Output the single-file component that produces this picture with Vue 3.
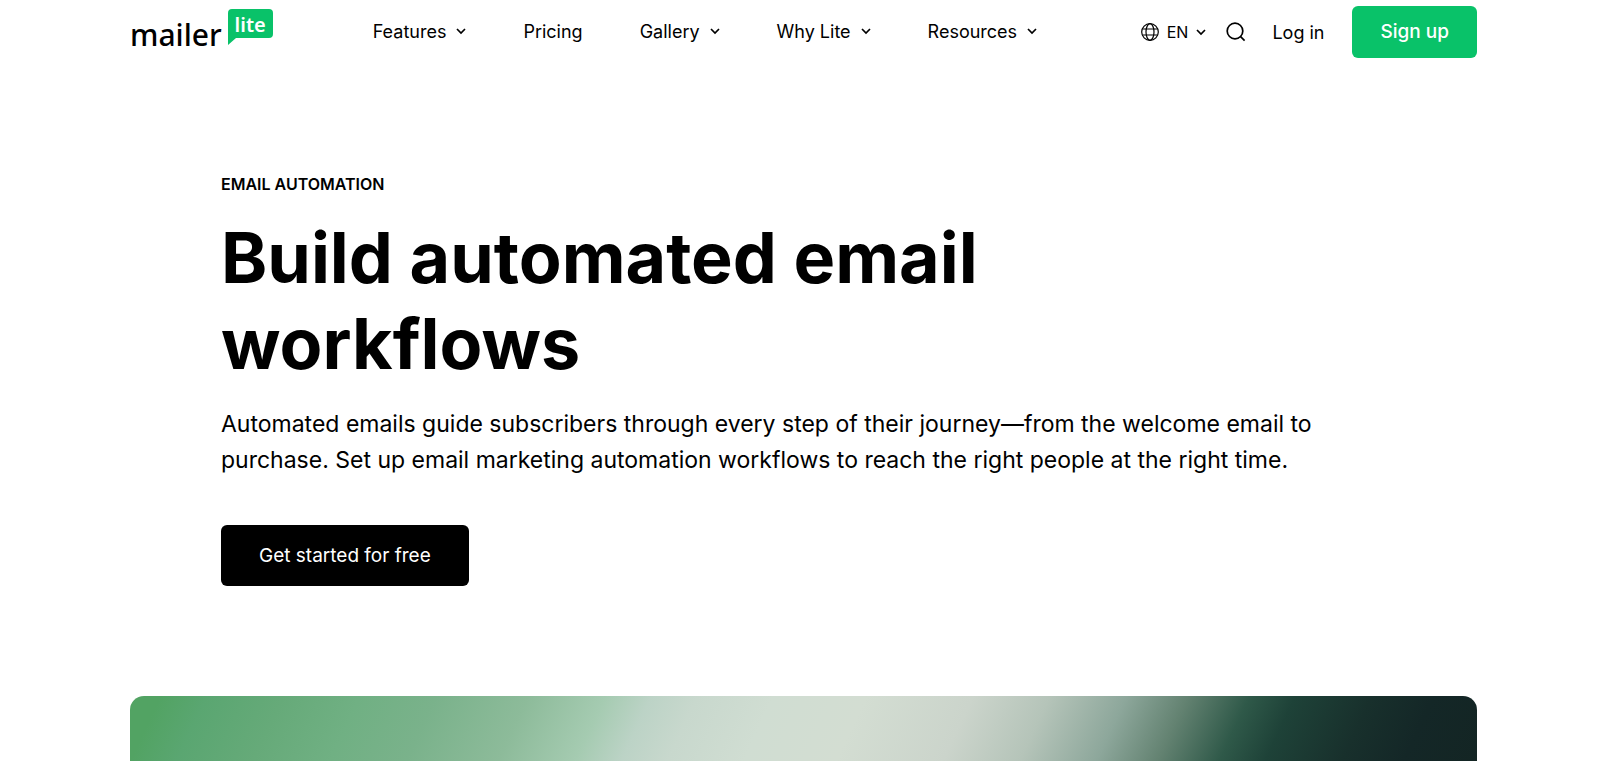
<script setup>
const links = [
  { label: 'Features', menu: true },
  { label: 'Pricing', menu: false },
  { label: 'Gallery', menu: true },
  { label: 'Why Lite', menu: true },
  { label: 'Resources', menu: true },
]
</script>

<template>
  <div class="page">
    <header class="bar">
      <a class="logo" href="#" aria-label="MailerLite home">
        <span class="logo-word">mailer</span>
        <span class="logo-bubble">
          <svg class="bubble-shape" viewBox="0 0 45 37" aria-hidden="true">
            <path d="M4 0H41Q45 0 45 4V25Q45 29 41 29H8L0 36V4Q0 0 4 0Z" fill="#09c269" />
          </svg>
          <span class="logo-lite">lite</span>
        </span>
      </a>

      <nav class="links" aria-label="Main">
        <template v-for="link in links" :key="link.label">
          <button v-if="link.menu" class="link" type="button">
            {{ link.label }}
            <svg class="chevron" viewBox="0 0 10 10" aria-hidden="true"><path d="M1 2L5 6L9 2" /></svg>
          </button>
          <a v-else class="link plain" href="#">{{ link.label }}</a>
        </template>
      </nav>

      <div class="tools">
        <button class="language" type="button">
          <svg class="globe" viewBox="0 0 18 18" aria-hidden="true">
            <circle cx="9" cy="9" r="8.3" />
            <ellipse cx="9" cy="9" rx="4" ry="8.3" />
            <path d="M1.5 6H16.5M1.5 12H16.5" />
          </svg>
          EN
          <svg class="chevron" viewBox="0 0 10 10" aria-hidden="true"><path d="M1 3L5 7L9 3" /></svg>
        </button>
        <button class="search" type="button" aria-label="Search">
          <svg viewBox="0 0 20 20" aria-hidden="true">
            <circle cx="9" cy="9" r="7.8" />
            <path d="M14.6 14.6L18.6 18.6" />
          </svg>
        </button>
        <a class="login" href="#">Log in</a>
        <a class="signup" href="#">Sign up</a>
      </div>
    </header>

    <main>
      <section class="hero">
        <p class="eyebrow">EMAIL AUTOMATION</p>
        <h1>Build automated email workflows</h1>
        <p class="lead">
          Automated emails guide subscribers through every step of their journey—from the welcome email to
          purchase. Set up email marketing automation workflows to reach the right people at the right time.
        </p>
        <a class="cta" href="#">Get started for free</a>
      </section>
      <div class="banner"></div>
    </main>
  </div>
</template>

<style>
body {
  margin: 0;
  background: #fff;
}
html {
  overflow: hidden;
}
</style>

<style scoped>
.page {
  height: 100vh;
  overflow: hidden;
  padding: 0 123px 0 130px;
  color: #000;
  font-family: Inter, "Liberation Sans", sans-serif;
  box-sizing: border-box;
}
a {
  color: inherit;
  text-decoration: none;
}
button {
  padding: 0;
  border: 0;
  background: none;
  color: inherit;
  font: inherit;
}
svg {
  display: block;
  fill: none;
  stroke: currentColor;
}
.bar {
  display: flex;
  align-items: center;
  height: 64px;
}
.logo {
  display: flex;
  align-items: flex-start;
  gap: 6px;
  height: 46px;
  font-family: "Noto Sans", sans-serif;
}
.logo-word {
  padding-top: 4px;
  font-size: 30px;
  font-weight: 500;
  line-height: 44px;
}
.logo-bubble {
  position: relative;
  width: 45px;
  height: 37px;
}
.bubble-shape {
  width: 45px;
  height: 37px;
  stroke: none;
}
.logo-lite {
  position: absolute;
  inset: 0 0 8px;
  color: #fff;
  font-size: 20px;
  font-weight: 600;
  line-height: 31px;
  text-align: center;
}
.links {
  display: flex;
  gap: 57px;
  margin-left: 100px;
}
.link {
  display: flex;
  align-items: center;
  gap: 10px;
  font-size: 18px;
  line-height: 24px;
}
.chevron {
  width: 10px;
  height: 10px;
  stroke-width: 1.7;
}
.tools {
  display: flex;
  align-items: center;
  margin-left: auto;
}
.language {
  display: flex;
  align-items: center;
  gap: 8px;
  font-size: 16px;
}
.globe {
  width: 18px;
  height: 18px;
  stroke-width: 1.2;
}
.search {
  margin-left: 20px;
}
.search svg {
  width: 20px;
  height: 20px;
  stroke-width: 1.7;
}
.login {
  margin-left: 26px;
  font-size: 18px;
}
.signup {
  margin-left: 28px;
  padding: 14px 28px;
  border-radius: 6px;
  background: #09c269;
  color: #fff;
  font-size: 19px;
  font-weight: 500;
  line-height: 24px;
}
.hero {
  padding: 108px 91px 0;
}
.eyebrow {
  margin: 0;
  font-size: 16px;
  font-weight: 600;
  line-height: 24px;
}
h1 {
  max-width: 900px;
  margin: 19px 0 0;
  font-size: 70px;
  font-weight: 700;
  line-height: 86px;
}
.lead {
  margin: 19px 0 0;
  font-size: 23px;
  line-height: 36px;
}
.cta {
  display: inline-block;
  margin-top: 47px;
  padding: 18px 38px;
  border-radius: 6px;
  background: #000;
  color: #fff;
  font-size: 19px;
  line-height: 25px;
}
.banner {
  height: 400px;
  margin-top: 110px;
  border-radius: 14px;
  background: linear-gradient(
    115deg,
    #52a363 2%,
    #5aa671 5%,
    #66aa79 10%,
    #70b083 15%,
    #7ab28b 20%,
    #8dbb9a 26%,
    #a5cbb1 31%,
    #bcd3c6 34%,
    #c8d8cd 37%,
    #d0ddd2 42%,
    #d3ddd2 48%,
    #cbd4cb 55%,
    #b5c4b9 60%,
    #8da79b 65%,
    #638271 69%,
    #2f5949 73%,
    #1e4238 76%,
    #18302c 81%,
    #142727 85%,
    #132422 92%
  );
}
</style>
